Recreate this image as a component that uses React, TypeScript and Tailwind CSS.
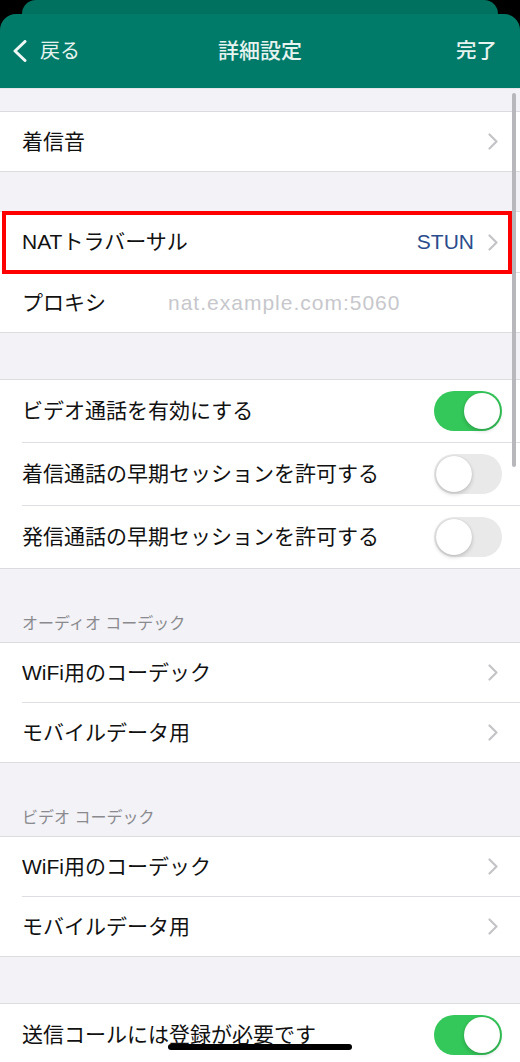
import React from "react";

const font = { fontFamily: '"Liberation Sans", "Noto Sans CJK JP", sans-serif' };

function Chevron() {
  return (
    <svg width="10" height="17" viewBox="0 0 10 17" className="ml-[14px] shrink-0">
      <path d="M1.5 1.5 L8.5 8.5 L1.5 15.5" fill="none" stroke="#c4c4c8" strokeWidth="2.2" strokeLinecap="round" strokeLinejoin="round" />
    </svg>
  );
}

function Toggle({ on }: { on: boolean }) {
  return (
    <div className={"w-[68px] h-[40px] rounded-full p-[2px] flex shrink-0 " + (on ? "bg-[#34c759] justify-end" : "bg-[#e9e9ea] justify-start")}>
      <div className="w-[36px] h-[36px] rounded-full bg-white shadow-[0_2px_4px_rgba(0,0,0,0.18),0_0_1px_rgba(0,0,0,0.2)]" />
    </div>
  );
}

function Row({ label, right, last, h = 60, toggle }: { label: string; right?: React.ReactNode; last?: boolean; h?: number; toggle?: boolean }) {
  return (
    <div className="pl-[22px]">
      <div
        className={"flex items-center " + (toggle ? "pr-[18px] " : "pr-[22px] ") + (last ? "" : "border-b border-[#dedee2]")}
        style={{ height: h }}
      >
        <span className="text-[21px] text-[#111] flex-1 truncate">{label}</span>
        {right}
      </div>
    </div>
  );
}

function Group({ children }: { children: React.ReactNode }) {
  return <div className="bg-white border-y border-[#dcdcdf]">{children}</div>;
}

function SectionHeader({ text }: { text: string }) {
  return (
    <div className="h-[73px] flex items-end pb-[6px] pl-[22px] text-[16px] text-[#8a8a8e]">{text}</div>
  );
}

export default function App() {
  return (
    <div className="w-[520px] h-[1062px] overflow-hidden relative bg-[#f2f2f7]" style={font}>
      {/* header */}
      <div className="bg-black">
        <div className="mx-[22px] h-[14px] rounded-t-[14px] bg-[#00705f]" />
        <div className="h-[74px] rounded-t-[16px] bg-[#007b69] flex items-center px-[12px] text-[#e6f3ef]">
          <div className="flex items-center w-[120px]">
            <svg width="16" height="22" viewBox="0 0 16 22">
              <path d="M13 1.5 L3 11 L13 20.5" fill="none" stroke="#f0f8f6" strokeWidth="3" strokeLinecap="round" strokeLinejoin="round" />
            </svg>
            <span className="ml-[12px] text-[20px]">戻る</span>
          </div>
          <div className="flex-1 text-center text-[21px] font-medium">詳細設定</div>
          <div className="w-[120px] text-right pr-[11px] text-[20.5px] font-medium">完了</div>
        </div>
      </div>
      <div className="h-[23px] border-t border-[#e6e6ea]" />

      <Group>
        <Row label="着信音" right={<Chevron />} last h={59} />
      </Group>
      <div className="h-[39px]" />

      <Group>
        <div className="relative">
          <Row label="NATトラバーサル" right={<><span className="text-[21px] text-[#2b4c8c]">STUN</span><Chevron /></>} h={61} />
          <div className="absolute left-[2px] right-[8px] top-[-1px] bottom-[-1px] border-[4px] border-[#ff0000]" />
        </div>
        <div className="pl-[22px] h-[59px] flex items-center">
          <span className="text-[21px] text-[#111] w-[146px]">プロキシ</span>
          <span className="text-[21px] tracking-[1px] text-[#c7c7cc]">nat.example.com:5060</span>
        </div>
      </Group>
      <div className="h-[46px]" />

      <Group>
        <Row label="ビデオ通話を有効にする" right={<Toggle on />} h={63} toggle />
        <Row label="着信通話の早期セッションを許可する" right={<Toggle on={false} />} h={63} toggle />
        <Row label="発信通話の早期セッションを許可する" right={<Toggle on={false} />} h={62} toggle last />
      </Group>

      <SectionHeader text="オーディオ コーデック" />
      <Group>
        <Row label="WiFi用のコーデック" right={<Chevron />} />
        <Row label="モバイルデータ用" right={<Chevron />} last h={59} />
      </Group>

      <SectionHeader text="ビデオ コーデック" />
      <Group>
        <Row label="WiFi用のコーデック" right={<Chevron />} />
        <Row label="モバイルデータ用" right={<Chevron />} last h={59} />
      </Group>
      <div className="h-[46px]" />

      <Group>
        <Row label="送信コールには登録が必要です" right={<Toggle on />} h={62} toggle last />
      </Group>

      {/* scroll indicator */}
      <div className="absolute left-[512px] top-[93px] w-[4px] h-[374px] rounded-full bg-[#b8b8bc]" />
      {/* home indicator */}
      <div className="absolute left-[168px] top-[1044px] w-[184px] h-[6px] rounded-full bg-black" />
    </div>
  );
}
